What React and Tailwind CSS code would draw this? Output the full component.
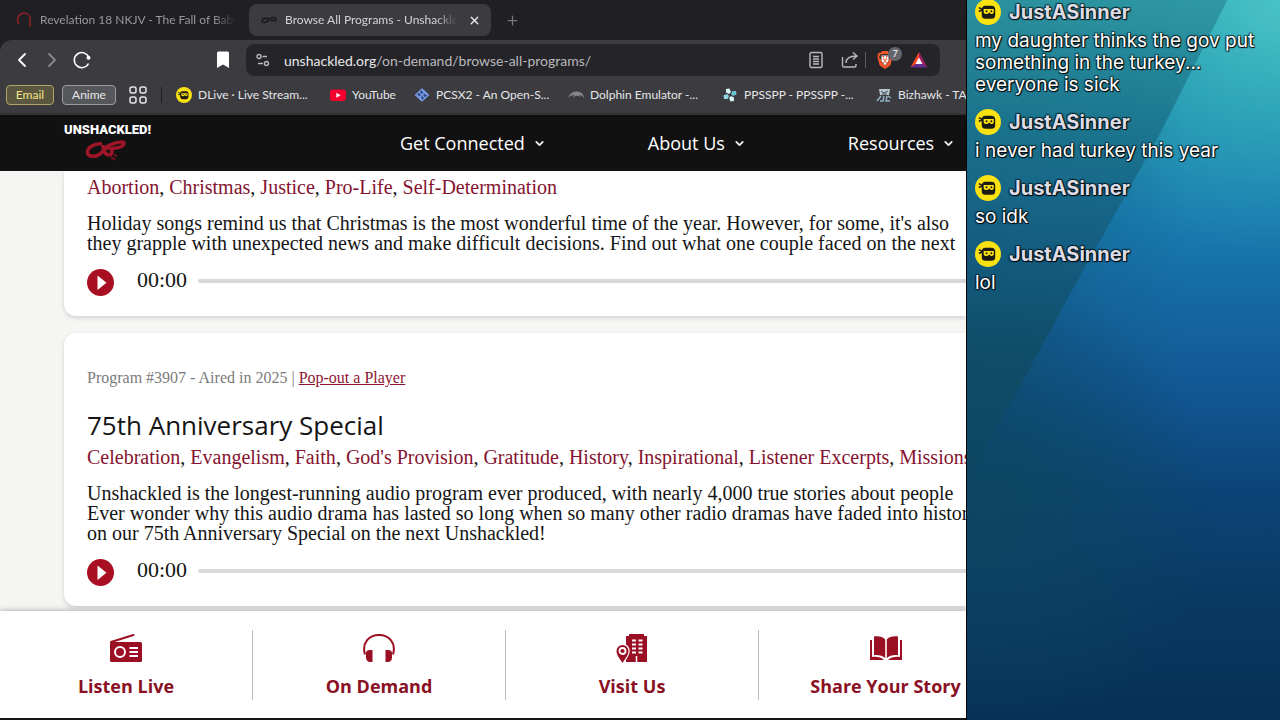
import React from "react";
import { ChevronDown, ChevronLeft, ChevronRight, Plus, X } from "lucide-react";
import { SiBrave } from "react-icons/si";

const DliveIcon = ({ className }) => (
  <svg viewBox="0 0 27 27" className={className} aria-hidden="true">
    <circle cx="13.500" cy="13.500" r="13.500" fill="#f9e112" />
    <path d="M4 9l4 2-4 2M4.500 12.500l4-1" stroke="#1b1a14" strokeWidth="1.500" fill="none" />
    <rect x="7" y="7" width="14" height="13.500" rx="4" fill="#1b1a14" />
    <path d="M9 10.500h10.500v3.500q-1 2-3 1.500l-1.800-1.500-1.800 1.500q-3 .5-3.900-1.500z" fill="#f9e112" />
    <circle cx="12" cy="12.700" r="1" fill="#1b1a14" />
    <circle cx="17" cy="12.700" r="1" fill="#1b1a14" />
  </svg>
);

const YoutubeIcon = () => (
  <svg viewBox="0 0 16 16" className="size-4" aria-hidden="true">
    <rect y="2.500" width="16" height="11.500" rx="3" fill="#f4002f" />
    <path d="M6.300 5.700v5l4.300-2.500z" fill="#fff" />
  </svg>
);

const PcsxIcon = () => (
  <svg viewBox="0 0 16 16" className="size-4" fill="none" stroke="#7e9fe6" strokeWidth="1.200" aria-hidden="true">
    <path d="M8 2l6.500 6L8 14 1.500 8z" fill="#2c4684" />
    <path d="M5 5l6 6M3 8l5 4.500M8 3.500L13 8M5 11l6-6" />
  </svg>
);

const DolphinIcon = () => (
  <svg viewBox="0 0 16 16" className="size-4" aria-hidden="true">
    <path d="M0 10.500C2 6.500 5 4 9 4.500c4 .3 6.500 2.500 7 6.500-1.500-2-3-3-4.500-3 .5.500.5 1 .5 2-2-2-5.500-1.500-7 1 0-1.500.5-2.500 1.500-3C4 8 2 9 0 10.500z" fill="#85868b" />
  </svg>
);

const PpssppIcon = () => (
  <svg viewBox="0 0 16 16" className="size-4" aria-hidden="true">
    <path d="M4 2l3.500-.5L9 5 7 7 4 5.500z" fill="#d8f4f7" />
    <path d="M14 4l.5 3.500L11 9 9 7l1.500-3z" fill="#6cc3d2" />
    <path d="M12 14l-3.500.5L7 11l2-2 3 1.500z" fill="#d8f4f7" />
    <path d="M2 12l-.5-3.500L5 7l2 2-1.500 3z" fill="#8fdbe5" />
  </svg>
);

const BizhawkIcon = () => (
  <svg viewBox="0 0 16 16" className="size-4" fill="none" aria-hidden="true">
    <path d="M3 2h11l-1 6H4z" fill="#b9c7cf" />
    <path d="M5 4l3 2 4-2M6 7h5" stroke="#3b4c55" />
    <path d="M1 14l4-5M4 14h3l1-5M11 9l-1 5h4M12 9l3 2" stroke="#8fb2c4" strokeWidth="1.500" />
  </svg>
);

const ShackleIcon = ({ className }) => (
  <svg viewBox="0 0 44 22" className={className} fill="none" aria-hidden="true">
    <path
      d="M18 5C10 4 3 9 3.500 13.500c.5 4.500 8 5 12.500 1.500C20 12 20 8 26 6c7-3 14-4 14-2 0 3-6 6-12 5M19 6c0 5 2 10 6 10 2.500 0 4-3 2.500-5.500-2-3-7-1-8.500 1"
      stroke="#9e1528"
      strokeWidth="3.500"
    />
    <path d="M27 18.500l4 2M30 16l3 1" stroke="#74101d" strokeWidth="2" />
  </svg>
);

const RadioIcon = () => (
  <svg viewBox="0 0 32 30" className="h-[30px] w-8" aria-hidden="true">
    <path d="M1 9L23.500 2" stroke="#9b0f24" strokeWidth="2" strokeLinecap="round" />
    <rect y="9" width="32" height="20" rx="1.500" fill="#9b0f24" />
    <circle cx="10" cy="19" r="5" fill="none" stroke="#fff" strokeWidth="2" />
    <path d="M19.500 15H28M19.500 19H28M19.500 23H28" stroke="#fff" strokeWidth="1.800" />
  </svg>
);

const HeadphonesIcon = () => (
  <svg viewBox="0 0 32 30" className="h-[30px] w-8" aria-hidden="true">
    <path d="M2 21.500C-1.500 10 6 2 16 2s17.500 8 14 19.500" fill="none" stroke="#9b0f24" strokeWidth="2" />
    <path d="M9.500 17v12H7.500C4.500 29 3 27 3 24.500V20c0-2 1.500-3 4-3z" fill="#9b0f24" />
    <path d="M22.500 17v12h2c3 0 4.500-2 4.500-4.500V20c0-2-1.500-3-4-3z" fill="#9b0f24" />
  </svg>
);

const VisitIcon = () => (
  <svg viewBox="0 0 32 30" className="h-[30px] w-8" aria-hidden="true">
    <path d="M10 3h3V1h15v2h3v26H10z" fill="#9b0f24" />
    <path
      d="M16 7.500h4M22.500 7.500h4M16 11.500h4M22.500 11.500h4M16 15.500h4M22.500 15.500h4M16 19.500h4M22.500 19.500h4"
      stroke="#fff"
      strokeWidth="1.800"
    />
    <path d="M20.500 23v6" stroke="#fff" strokeWidth="1.500" />
    <path
      d="M6.500 30C4 26 .5 22 .5 18a6 6 0 0 1 12 0c0 4-3.500 8-6 12z"
      fill="#9b0f24"
      stroke="#fff"
      strokeWidth="2.500"
      paintOrder="stroke"
    />
    <circle cx="6.500" cy="18" r="3" fill="none" stroke="#fff" strokeWidth="1.800" />
  </svg>
);

const BookIcon = () => (
  <svg viewBox="0 0 32 30" className="h-[30px] w-8" fill="#9b0f24" aria-hidden="true">
    <path d="M4 3.500c5-.7 9 .5 11.200 3v18.500C12.500 22.500 9 21.500 4 22z" />
    <path d="M28 3.500c-5-.7-9 .5-11.200 3v18.500c2.700-2.500 6.200-3.500 11.200-3z" />
    <path d="M0 7h2v17c5-.6 9 .2 12 3H0zM32 7h-2v17c-5-.6-9 .2-12 3h14z" />
  </svg>
);

const bookmarks = [
  { label: "DLive · Live Stream...", icon: <DliveIcon className="size-4" />, width: "w-[154px]" },
  { label: "YouTube", icon: <YoutubeIcon />, width: "w-[84px]" },
  { label: "PCSX2 - An Open-S...", icon: <PcsxIcon />, width: "w-[154px]" },
  { label: "Dolphin Emulator -...", icon: <DolphinIcon />, width: "w-[154px]" },
  { label: "PPSSPP - PPSSPP -...", icon: <PpssppIcon />, width: "w-[154px]" },
  { label: "Bizhawk - TASVideos", icon: <BizhawkIcon />, width: "w-[154px]" },
];

const programs = [
  {
    id: 3908,
    tags: ["Abortion", "Christmas", "Justice", "Pro-Life", "Self-Determination"],
    lines: [
      "Holiday songs remind us that Christmas is the most wonderful time of the year. However, for some, it's also",
      "they grapple with unexpected news and make difficult decisions. Find out what one couple faced on the next",
    ],
  },
  {
    id: 3907,
    title: "75th Anniversary Special",
    aired: 2025,
    tags: [
      "Celebration",
      "Evangelism",
      "Faith",
      "God's Provision",
      "Gratitude",
      "History",
      "Inspirational",
      "Listener Excerpts",
      "Missions",
    ],
    lines: [
      "Unshackled is the longest-running audio program ever produced, with nearly 4,000 true stories about people",
      "Ever wonder why this audio drama has lasted so long when so many other radio dramas have faded into history",
      "on our 75th Anniversary Special on the next Unshackled!",
    ],
  },
];

const footerLinks = [
  { label: "Listen Live", icon: <RadioIcon /> },
  { label: "On Demand", icon: <HeadphonesIcon /> },
  { label: "Visit Us", icon: <VisitIcon /> },
  { label: "Share Your Story", icon: <BookIcon /> },
];

const messages = [
  "my daughter thinks the gov put something in the turkey... everyone is sick",
  "i never had turkey this year",
  "so idk",
  "lol",
];

const TabStrip = () => (
  <div className="flex h-10 shrink-0 items-center gap-1 bg-[#202024] text-[12px]">
    <button className="flex h-8 w-[245px] shrink-0 items-center gap-2 pl-4 text-[#98989c]">
      <svg viewBox="0 0 16 16" className="size-4 shrink-0" fill="none" stroke="#8c2026" strokeWidth="1.500" aria-hidden="true">
        <path d="M3 12C-1 6 4 1 8 1c4 0 6 3 6 6v8" />
      </svg>
      <span className="w-[196px] overflow-hidden text-left whitespace-nowrap [mask-image:linear-gradient(to_right,black_88%,transparent)]">
        Revelation 18 NKJV - The Fall of Babylon
      </span>
    </button>
    <div className="flex h-8 w-[242px] shrink-0 items-center rounded-lg bg-[#3c3c40] pr-2 pl-3 text-[#d3d3d6]">
      <svg viewBox="0 0 16 16" className="mr-2 size-4 shrink-0" fill="none" stroke="#1d1d20" strokeWidth="2" aria-hidden="true">
        <path d="M8 7C4 5 1 7 1 9s5 2 7-1 6-3 7-1-4 2-5 1" />
      </svg>
      <span className="w-[172px] overflow-hidden whitespace-nowrap [mask-image:linear-gradient(to_right,black_88%,transparent)]">
        Browse All Programs - Unshackled
      </span>
      <button aria-label="Close tab" className="ml-auto p-0.5 text-[#e8e8ea]">
        <X size={13} strokeWidth={2.5} />
      </button>
    </div>
    <button aria-label="New tab" className="ml-2.5 text-[#77777c]">
      <Plus size={15} strokeWidth={2} />
    </button>
  </div>
);

const Toolbar = () => (
  <div className="bg-[#202024]">
    <div className="flex h-10 items-center rounded-tl-xl bg-[#3c3c40] pr-[26px] pl-2.5">
      <button aria-label="Back" className="w-[30px] text-white">
        <ChevronLeft size={24} strokeWidth={1.8} />
      </button>
      <button aria-label="Forward" className="w-[30px] text-[#88888c]">
        <ChevronRight size={24} strokeWidth={1.8} />
      </button>
      <button aria-label="Reload" className="ml-0.5 text-white">
        <svg viewBox="0 0 20 20" className="size-5" fill="none" stroke="currentColor" strokeWidth="1.500">
          <path d="M16.500 13.500A7.500 7.500 0 1 1 17 8" />
          <circle cx="16.500" cy="7.800" r="2" fill="currentColor" stroke="none" />
        </svg>
      </button>
      <button aria-label="Bookmark this page" className="ml-[124px] text-white">
        <svg viewBox="0 0 14 18" className="h-[18px] w-3.5" fill="currentColor">
          <path d="M2.500.5h9A1.500 1.500 0 0 1 13 2v15l-6-3.500L1 17V2A1.500 1.500 0 0 1 2.500.5z" />
        </svg>
      </button>
      <div className="ml-4 flex h-8 min-w-0 flex-1 items-center rounded-lg bg-[#252529] pr-3 pl-2.5 text-[#b9b9bd]">
        <svg viewBox="0 0 14 14" className="size-3.5 shrink-0" fill="none" stroke="currentColor" strokeWidth="1.400" aria-hidden="true">
          <circle cx="3" cy="3.500" r="2" />
          <path d="M6.500 3.500H11M2 10.500h5" />
          <circle cx="10.500" cy="10.500" r="2" />
        </svg>
        <div className="ml-3.5 flex-1 text-[14px] whitespace-nowrap">
          <span className="text-[#e9e9eb]">unshackled.org</span>/on-demand/browse-all-programs/
        </div>
        <button aria-label="Reader view">
          <svg viewBox="0 0 14 18" className="h-[18px] w-3.5" fill="none" stroke="currentColor" strokeWidth="1.400">
            <rect x="1" y="1.500" width="12" height="15" rx="1.500" />
            <path d="M4 5.500h6M4 8h6M4 10.500h6M4 13h6" />
          </svg>
        </button>
        <button aria-label="Share" className="ml-[18px]">
          <svg viewBox="0 0 18 18" className="size-[18px]" fill="none" stroke="currentColor" strokeWidth="1.400">
            <path d="M1.500 6v8.500A1.500 1.500 0 0 0 3 16h10.500a1.500 1.500 0 0 0 1.500-1.500V13" />
            <path d="M5 12c0-4.500 3-7 10.500-7M12 1.500L16 5l-4 3.500" />
          </svg>
        </button>
        <div className="ml-1.5 h-4 w-px bg-[#59595e]" />
        <button aria-label="Brave Shields" className="relative ml-2.5 text-[#f1562b]">
          <svg viewBox="0 0 18 20" className="absolute top-0 left-0 h-[18px] w-[18px]" aria-hidden="true">
            <path d="M5 5h8v6l-4 5-4-5z" fill="#fff" />
          </svg>
          <SiBrave size={18} className="relative" />
          <span className="absolute -top-1 -right-2 flex size-3.5 items-center justify-center rounded-full bg-[#64666c] text-[9px] text-white">
            7
          </span>
        </button>
        <button aria-label="Brave Rewards" className="ml-4">
          <svg viewBox="0 0 18 18" className="size-[18px]">
            <path d="M9 1L.5 16.500 9 11z" fill="#ff4724" />
            <path d="M9 1l8.500 15.500L9 11z" fill="#9e1f63" />
            <path d="M.5 16.500h17L9 11z" fill="#662d91" />
            <path d="M9 6.500l3.500 6.500h-7z" fill="#fff" />
          </svg>
        </button>
      </div>
    </div>
  </div>
);

const BookmarksBar = () => (
  <div className="flex h-[35px] shrink-0 items-center border-b-2 border-[#333336] bg-[#3c3c40] pb-[3px] pl-1.5 text-[12px] whitespace-nowrap text-[#e6e6e8]">
    <button className="h-5 w-12 shrink-0 rounded-sm border border-[#b0a469] bg-[#5a563f] leading-4 text-[#f5e488]">Email</button>
    <button className="ml-2 h-5 w-[54px] shrink-0 rounded-sm border border-[#9b9ca1] bg-[#56575b] leading-4">Anime</button>
    <button aria-label="Tab groups" className="ml-[13px] shrink-0">
      <svg viewBox="0 0 18 18" className="size-[18px]" fill="none" stroke="currentColor" strokeWidth="1.500">
        <rect x="1" y="1" width="6" height="6" rx="2" />
        <rect x="11" y="1" width="6" height="6" rx="2" />
        <rect x="1" y="11" width="6" height="6" rx="2" />
        <rect x="11" y="11" width="6" height="6" rx="2" />
      </svg>
    </button>
    <div className="mr-3.5 ml-3.5 h-4 w-px shrink-0 bg-[#1f1f22]" />
    {bookmarks.map((item) => (
      <a key={item.label} href="#" className={`flex shrink-0 items-center gap-1.5 ${item.width}`}>
        {item.icon}
        {item.label}
      </a>
    ))}
  </div>
);

const SiteHeader = () => (
  <header className="flex h-14 shrink-0 items-center bg-[#111111] pl-16 text-white">
    <a href="#" aria-label="Unshackled!" className="flex h-full w-[336px] shrink-0 flex-col items-start pt-1">
      <span className="font-[Roboto,sans-serif] text-[13px] leading-[22px] font-black">UNSHACKLED!</span>
      <ShackleIcon className="-mt-0.5 ml-5 h-[22px] w-11" />
    </a>
    <nav className="flex gap-[102px] text-[18px] whitespace-nowrap">
      {["Get Connected", "About Us", "Resources"].map((item) => (
        <button key={item} className="flex items-center gap-2">
          {item}
          <ChevronDown size={13} strokeWidth={3} />
        </button>
      ))}
    </nav>
  </header>
);

const Player = ({ id }) => (
  <div className="mt-4 flex items-center">
    <button aria-label="Play" className="shrink-0">
      <svg viewBox="0 0 27 27" className="size-[27px]">
        <circle cx="13.500" cy="13.500" r="13.500" fill="#a90f22" />
        <path d="M10.500 6.500v14.500l9-7.200z" fill="#fff" />
      </svg>
    </button>
    <label htmlFor={`seek-${id}`} className="mr-2.5 mb-1.5 ml-[23px] w-[51px] text-[22px] leading-5">
      00:00
    </label>
    <input
      id={`seek-${id}`}
      type="range"
      defaultValue="0"
      className="mb-1 h-1 min-w-0 flex-1 appearance-none rounded-l-full bg-[#d8d8d8] [&::-webkit-slider-thumb]:appearance-none"
    />
  </div>
);

const ProgramCard = ({ program }) => (
  <article
    className={`bg-white pb-5 pl-[23px] shadow-[0_2px_4px_rgba(0,0,0,0.15)] ${
      program.title ? "rounded-tl-xl rounded-bl-xl pt-[35px]" : "rounded-bl-xl pt-1.5"
    }`}
  >
    {program.title && (
      <>
        <p className="text-[16px] leading-5 text-[#7b7b7b]">
          Program #{program.id} - Aired in {program.aired} |{" "}
          <a href="#" className="text-[#8c1430] underline">
            Pop-out a Player
          </a>
        </p>
        <h2 className="mt-[21px] font-['Open_Sans',sans-serif] text-[26px] leading-8">{program.title}</h2>
      </>
    )}
    <p className={`text-[20px] leading-5 ${program.title ? "mt-1.5" : ""}`}>
      {program.tags.map((tag, i) => (
        <React.Fragment key={tag}>
          {i > 0 && ", "}
          <a href="#" className="text-[#851330]">
            {tag}
          </a>
        </React.Fragment>
      ))}
    </p>
    <div className="mt-4 text-[20px] leading-5">
      {program.lines.map((line) => (
        <p key={line}>{line}</p>
      ))}
    </div>
    <Player id={program.id} />
  </article>
);

const FooterNav = () => (
  <nav className="relative flex h-[107px] shrink-0 items-center bg-white shadow-[0_0_6px_rgba(0,0,0,0.35)]">
    {footerLinks.map((item) => (
      <a
        key={item.label}
        href="#"
        className="flex h-[70px] w-[253px] shrink-0 flex-col items-center border-r border-[#bdbdbd] pt-[3px] text-[18px] leading-6 font-bold text-[#8a1024] last:border-r-0"
      >
        {item.icon}
        <span className="mt-[11px]">{item.label}</span>
      </a>
    ))}
  </nav>
);

const Wallpaper = () => (
  <svg viewBox="0 0 314 720" preserveAspectRatio="none" className="absolute inset-0 h-full w-full" aria-hidden="true">
    <defs>
      <linearGradient id="water" x1="0" y1="0" x2="0" y2="1">
        <stop offset="0" stopColor="#35a9b4" />
        <stop offset="0.150" stopColor="#2393ae" />
        <stop offset="0.300" stopColor="#1a7cb0" />
        <stop offset="0.420" stopColor="#1568a3" />
        <stop offset="0.550" stopColor="#115693" />
        <stop offset="0.680" stopColor="#0d4477" />
        <stop offset="0.820" stopColor="#093a64" />
        <stop offset="1" stopColor="#063056" />
      </linearGradient>
      <linearGradient id="shade" x1="0" y1="0" x2="0" y2="1">
        <stop offset="0" stopColor="#2c939f" />
        <stop offset="0.250" stopColor="#1b738c" />
        <stop offset="0.500" stopColor="#145c7e" />
        <stop offset="0.720" stopColor="#104c66" />
        <stop offset="1" stopColor="#0d4560" />
      </linearGradient>
      <linearGradient id="edge" x1="0" y1="0" x2="1" y2="0">
        <stop offset="0" stopColor="#0d4a68" stopOpacity="0.700" />
        <stop offset="0.700" stopColor="#0d4a68" stopOpacity="0" />
      </linearGradient>
      <radialGradient id="sun" gradientUnits="userSpaceOnUse" cx="314" cy="0" r="260">
        <stop offset="0" stopColor="#4bc4c6" />
        <stop offset="0.500" stopColor="#35b0c0" stopOpacity="0.500" />
        <stop offset="1" stopColor="#2a9fbb" stopOpacity="0" />
      </radialGradient>
      <radialGradient id="deep" gradientUnits="userSpaceOnUse" cx="20" cy="510" r="230">
        <stop offset="0" stopColor="#0d4560" stopOpacity="0.900" />
        <stop offset="1" stopColor="#0d4560" stopOpacity="0" />
      </radialGradient>
    </defs>
    <rect width="314" height="720" fill="url(#water)" />
    <rect width="314" height="600" fill="url(#sun)" />
    <rect width="314" height="510" fill="url(#edge)" opacity="0.600" />
    <rect width="314" height="720" fill="url(#deep)" />
    <path d="M0 0h261L194 133 104 293 40 410 0 480z" fill="url(#shade)" opacity="0.850" />
  </svg>
);

const ChatPanel = () => (
  <aside className="relative w-[314px] shrink-0 overflow-hidden border-l border-black bg-[#0a3c66]">
    <Wallpaper />
    <ul className="relative -mt-px flex flex-col gap-[13px] pr-5 pl-2 font-[Inter,sans-serif] text-[19px] leading-[22px] text-white [text-shadow:1px_1px_1px_#000,-1px_-1px_1px_#0008,1px_-1px_1px_#0008,-1px_1px_1px_#0008]">
      {messages.map((message) => (
        <li key={message}>
          <div className="flex h-[26px] items-center gap-2 text-[20px] font-bold text-[#dcdce6]">
            <DliveIcon className="size-[26px]" />
            JustASinner
          </div>
          <p className="mt-[5px]">{message}</p>
        </li>
      ))}
    </ul>
  </aside>
);

const App = () => {
  return (
    <div className="flex h-screen overflow-hidden font-['Open_Sans',sans-serif]">
      <div className="flex min-w-0 flex-1 flex-col overflow-hidden border-b-2 border-[#151515]">
        <div className="flex shrink-0 flex-col font-[Lato,sans-serif]">
          <TabStrip />
          <Toolbar />
          <BookmarksBar />
        </div>
        <SiteHeader />
        <main className="flex min-h-0 flex-1 flex-col gap-[17px] overflow-hidden bg-[#f5f5f4] pl-16 font-['Liberation_Serif',serif] whitespace-nowrap text-[#151515]">
          {programs.map((program) => (
            <ProgramCard key={program.id} program={program} />
          ))}
        </main>
        <FooterNav />
      </div>
      <ChatPanel />
    </div>
  );
};

export default App;
